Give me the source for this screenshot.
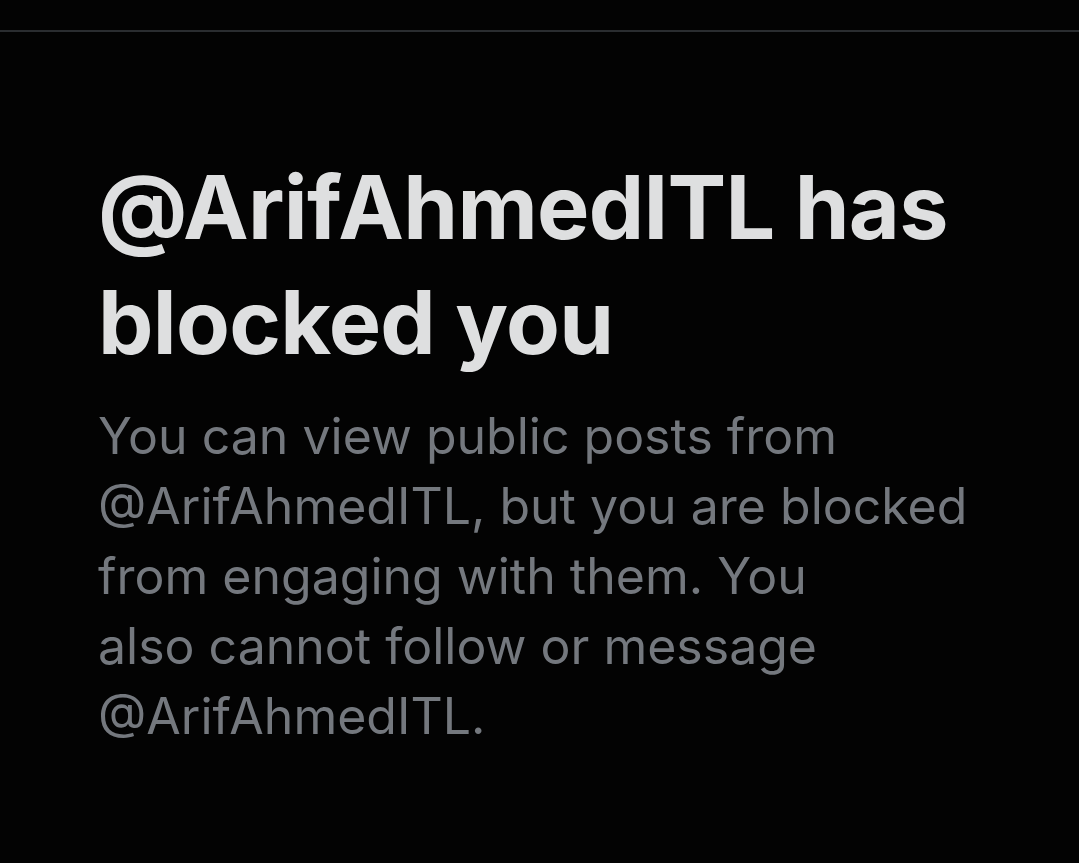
import React from "react";

const handle = "@ArifAhmedITL";

const BlockedNotice: React.FC = () => {
  return (
    <div className="px-[98px] pt-[118px]">
      <h2 className="text-[88px] leading-[115px] font-bold text-[#dedfe0] tracking-[-0.7px]">
        {handle} has
        <br />
        blocked you
      </h2>
      <p className="mt-[21px] text-[50px] leading-[70px] text-[#74787e]">
        You can view public posts from
        <br />
        {handle}, but you are blocked
        <br />
        from engaging with them. You
        <br />
        also cannot follow or message
        <br />
        {handle}.
      </p>
    </div>
  );
};

export default function App() {
  return (
    <div
      className="min-h-[863px] w-full bg-[#030303]"
      style={{ fontFamily: "Inter, 'Liberation Sans', sans-serif" }}
    >
      <div className="h-[30px]" />
      <div className="h-[2px] bg-[#2a2d30]" />
      <BlockedNotice />
    </div>
  );
}
